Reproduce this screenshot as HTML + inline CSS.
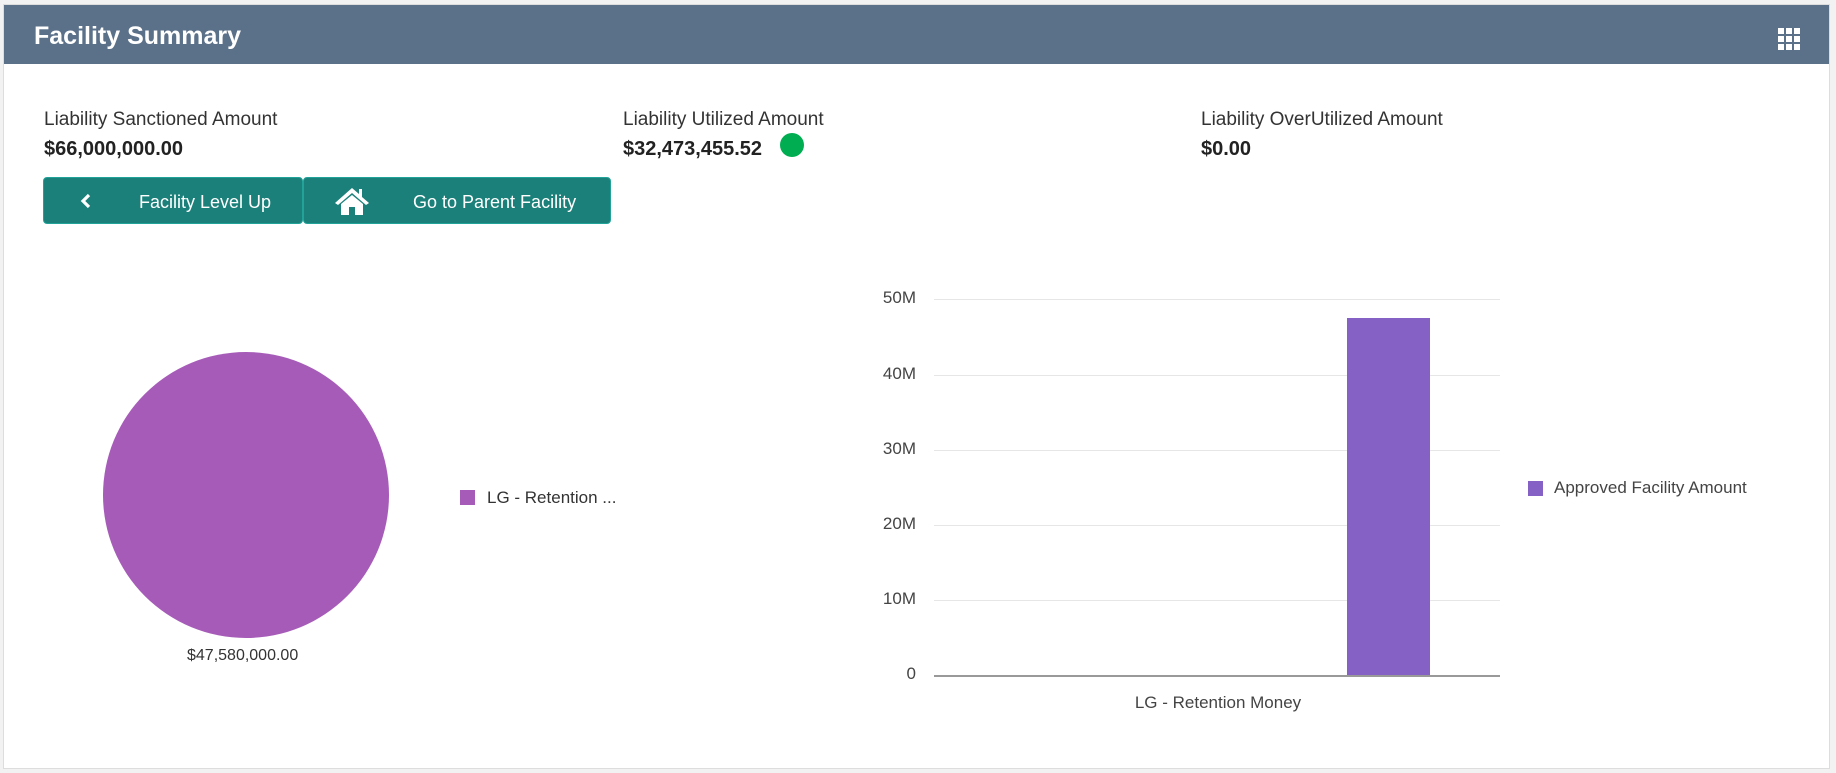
<!DOCTYPE html>
<html><head><meta charset="utf-8"><style>
html,body{margin:0;padding:0;width:1836px;height:773px;background:#f2f2f2;overflow:hidden;font-family:"Liberation Sans",sans-serif;color:#222}
.panel{position:absolute;left:3px;top:4px;width:1827px;height:765px;background:#fff;border:1px solid #ddd;box-sizing:border-box}
.hdr{position:absolute;left:0;top:0;width:100%;height:59px;background:#5b7089}
.hdr .t{position:absolute;left:30px;top:17px;font-size:25px;font-weight:bold;color:#fff}
.abs{position:absolute;white-space:nowrap}
.lbl{font-size:19px;color:#333}
.val{font-size:20px;font-weight:bold;color:#222}
.btn{position:absolute;top:177px;height:47px;background:#1c807a;border:1px solid #21a39a;border-radius:4px;box-sizing:border-box;color:#fff;font-size:18px}
</style></head><body>
<div class="panel">
 <div class="hdr"><div class="t">Facility Summary</div>
  <svg class="abs" style="left:1774px;top:23px" width="22" height="22" viewBox="0 0 22 22" fill="#fff">
   <rect x="0" y="0" width="6" height="6"/><rect x="8" y="0" width="6" height="6"/><rect x="16" y="0" width="6" height="6"/>
   <rect x="0" y="8" width="6" height="6"/><rect x="8" y="8" width="6" height="6"/><rect x="16" y="8" width="6" height="6"/>
   <rect x="0" y="16" width="6" height="6"/><rect x="8" y="16" width="6" height="6"/><rect x="16" y="16" width="6" height="6"/>
  </svg>
 </div>
</div>
<div class="abs lbl" style="left:44px;top:109px">Liability Sanctioned Amount</div>
<div class="abs val" style="left:44px;top:138px">$66,000,000.00</div>
<div class="abs lbl" style="left:623px;top:109px">Liability Utilized Amount</div>
<div class="abs val" style="left:623px;top:138px">$32,473,455.52</div>
<div class="abs" style="left:780px;top:133px;width:24px;height:24px;border-radius:50%;background:#00ad50"></div>
<div class="abs lbl" style="left:1201px;top:109px">Liability OverUtilized Amount</div>
<div class="abs val" style="left:1201px;top:138px">$0.00</div>

<div class="btn" style="left:43px;width:260px">
 <svg class="abs" style="left:36px;top:15px" width="12" height="16" viewBox="0 0 12 16"><path d="M9 2 L3 8 L9 14" stroke="#fff" stroke-width="3.2" fill="none"/></svg>
 <span class="abs" style="left:95px;top:14px">Facility Level Up</span>
</div>
<div class="btn" style="left:303px;width:308px">
 <svg class="abs" style="left:30px;top:8px" width="36" height="30" viewBox="0 0 36 30" fill="#fff">
  <path d="M18 2 L1 17 L4 19 L18 7 L32 19 L35 17 L28 11 L28 3 L25 3 L25 8 Z"/>
  <path d="M7 18 L18 9 L29 18 L29 29 L21 29 L21 21 L15 21 L15 29 L7 29 Z"/>
 </svg>
 <span class="abs" style="left:109px;top:14px">Go to Parent Facility</span>
</div>

<div class="abs" style="left:103px;top:352px;width:286px;height:286px;border-radius:50%;background:#a65bb8"></div>
<div class="abs" style="left:187px;top:647px;font-size:16px;color:#333">$47,580,000.00</div>
<div class="abs" style="left:460px;top:490px;width:15px;height:15px;background:#a65bb8"></div>
<div class="abs" style="left:487px;top:488px;font-size:17px;color:#333">LG - Retention ...</div>

<div class="abs" style="left:934px;top:299px;width:566px;height:1px;background:#e6e6e6"></div>
<div class="abs" style="left:934px;top:375px;width:566px;height:1px;background:#e6e6e6"></div>
<div class="abs" style="left:934px;top:450px;width:566px;height:1px;background:#e6e6e6"></div>
<div class="abs" style="left:934px;top:525px;width:566px;height:1px;background:#e6e6e6"></div>
<div class="abs" style="left:934px;top:600px;width:566px;height:1px;background:#e6e6e6"></div>
<div class="abs" style="left:1347px;top:318px;width:83px;height:358px;background:#8561c5"></div>
<div class="abs" style="left:934px;top:675px;width:566px;height:2px;background:#999"></div>
<div class="abs" style="left:860px;top:288px;width:56px;text-align:right;font-size:17px;color:#444">50M</div>
<div class="abs" style="left:860px;top:364px;width:56px;text-align:right;font-size:17px;color:#444">40M</div>
<div class="abs" style="left:860px;top:439px;width:56px;text-align:right;font-size:17px;color:#444">30M</div>
<div class="abs" style="left:860px;top:514px;width:56px;text-align:right;font-size:17px;color:#444">20M</div>
<div class="abs" style="left:860px;top:589px;width:56px;text-align:right;font-size:17px;color:#444">10M</div>
<div class="abs" style="left:860px;top:664px;width:56px;text-align:right;font-size:17px;color:#444">0</div>
<div class="abs" style="left:1118px;top:693px;width:200px;text-align:center;font-size:17px;color:#444">LG - Retention Money</div>
<div class="abs" style="left:1528px;top:481px;width:15px;height:15px;background:#8561c5"></div>
<div class="abs" style="left:1554px;top:478px;font-size:17px;color:#444">Approved Facility Amount</div>
</body></html>
